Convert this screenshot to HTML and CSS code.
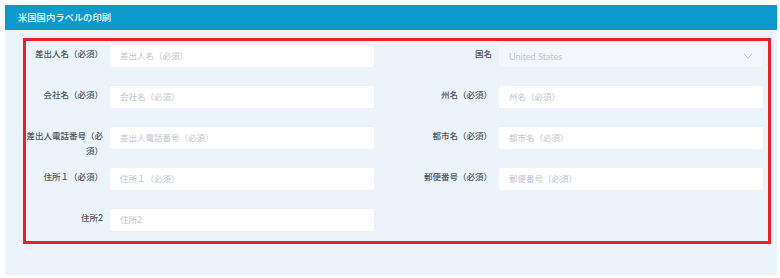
FILE: index.html
```html
<!DOCTYPE html>
<html lang="ja">
  <head>
    <meta charset="UTF-8" />
    <meta name="viewport" content="width=device-width, initial-scale=1.0" />
    <title>米国国内ラベルの印刷</title>
    <link rel="stylesheet" href="styles.css">
  </head>
  <body>
    <div class="panel">
      <div class="panel-header">米国国内ラベルの印刷</div>
      <div class="panel-body">
        <form class="label-form">
          <label class="form-label" for="senderName">差出人名（必須）</label>
          <input class="form-input" type="text" id="senderName" placeholder="差出人名（必須）" />
          <label class="form-label">国名</label>
          <div class="form-select">
            <span>United States</span>
            <svg width="10" height="6" viewBox="0 0 10 6">
              <path d="M1 1 L5 5 L9 1" fill="none" stroke="#c8ccd4" stroke-width="1" />
            </svg>
          </div>

          <label class="form-label" for="company">会社名（必須）</label>
          <input class="form-input" type="text" id="company" placeholder="会社名（必須）" />
          <label class="form-label" for="state">州名（必須）</label>
          <input class="form-input" type="text" id="state" placeholder="州名（必須）" />

          <label class="form-label" for="phone">差出人電話番号（必須）</label>
          <input class="form-input" type="text" id="phone" placeholder="差出人電話番号（必須）" />
          <label class="form-label" for="city">都市名（必須）</label>
          <input class="form-input" type="text" id="city" placeholder="都市名（必須）" />

          <label class="form-label" for="address1">住所１（必須）</label>
          <input class="form-input" type="text" id="address1" placeholder="住所１（必須）" />
          <label class="form-label" for="zip">郵便番号（必須）</label>
          <input class="form-input" type="text" id="zip" placeholder="郵便番号（必須）" />

          <label class="form-label" for="address2">住所2</label>
          <input class="form-input" type="text" id="address2" placeholder="住所2" />
        </form>
      </div>
    </div>
  </body>
</html>
```

FILE: styles.css
```css
* {
  box-sizing: border-box;
  margin: 0;
  padding: 0;
}

body {
  font-family: Lato, "Noto Sans CJK JP", sans-serif;
  background-color: #ffffff;
  padding: 5px 3px 3px 5px;
}

.panel {
  background-color: #ebf3fb;
  height: 270px;
}

.panel-header {
  height: 25px;
  line-height: 25px;
  padding-left: 13px;
  background-color: #0a9acc;
  color: #ffffff;
  font-size: 9.3px;
  font-weight: 500;
}

.panel-body {
  padding: 8px 6px 0 18px;
}

.label-form {
  display: grid;
  grid-template-columns: 83px 266px 123px 266px;
  grid-auto-rows: 24px;
  row-gap: 17px;
  padding: 3px 0 9px;
  border: 3px solid #e8202c;
  height: 206px;
}

.form-label {
  text-align: right;
  padding: 3px 6px 0 0;
  font-size: 8.5px;
  line-height: 15px;
  font-weight: 500;
  color: #4f5359;
}

.form-input,
.form-select {
  height: 24px;
  padding: 0 10px;
  border: 1px solid #eef1f5;
  border-radius: 3px;
  background-color: #ffffff;
  font-family: Lato, "Noto Sans CJK JP", sans-serif;
  font-size: 8.5px;
  color: #606266;
  outline: none;
}

.form-input::placeholder {
  color: #c0c4cc;
}

.form-select {
  display: flex;
  align-items: center;
  justify-content: space-between;
  background-color: #f3f6fa;
  color: #c0c4cc;
  font-size: 9px;
}
```
